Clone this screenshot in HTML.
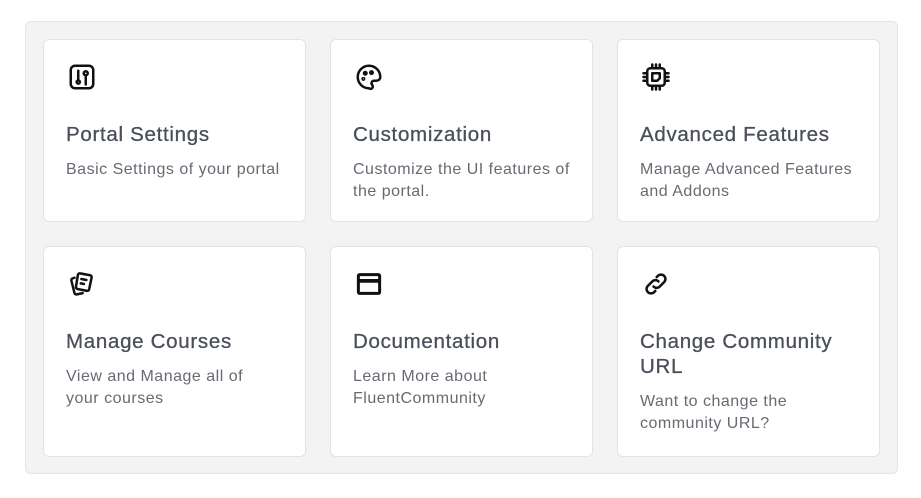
<!DOCTYPE html>
<html><head><meta charset="utf-8"><style>
*{box-sizing:border-box;margin:0;padding:0}
body{width:921px;height:498px;background:#fff;font-family:"Liberation Sans",sans-serif}
.wrap{position:absolute;left:25px;top:21px;width:873px;height:453px;background:#f3f3f3;border:1px solid #e4e4e4;border-radius:6px;padding:17px 17px 16px 17px;display:grid;grid-template-columns:263px 263px 263px;column-gap:24px;row-gap:24px;grid-template-rows:183px 211px}
.card{background:#fff;border:1px solid #e3e3e3;border-radius:6px;padding:22px 22px}
.card svg{display:block;width:30px;height:30px;margin-left:1px}
h3{font-size:20.5px;font-weight:normal;color:#4a4f5b;margin-top:30px;line-height:25px;letter-spacing:0.7px;-webkit-text-stroke:0.3px #4a4f5b}
p{font-size:16px;color:#666b73;margin-top:12px;line-height:22px;letter-spacing:0.5px}
</style></head><body>
<div class="wrap">
<div class="card"><svg viewBox="0 0 24 24" fill="none" stroke="#111" stroke-width="2" stroke-linecap="round"><rect x="3" y="3" width="18" height="18" rx="3.5"/><path d="M9 7v7"/><circle cx="9" cy="16" r="1.3"/><circle cx="15" cy="9" r="1.6"/><path d="M15 11v7"/></svg><h3>Portal Settings</h3><p>Basic Settings of your portal</p></div>
<div class="card"><svg viewBox="0 0 24 24" fill="none" stroke="#111" stroke-width="2" stroke-linecap="round" stroke-linejoin="round"><path d="M12 21a9 9 0 1 1 9-9c0 2-1.5 3-3.5 3H16a2 2 0 0 0-1.5 3.3A1.6 1.6 0 0 1 12 21z"/><circle cx="9" cy="9" r="1"/><circle cx="14" cy="8.5" r="1"/><circle cx="7.5" cy="13.5" r=".6"/></svg><h3>Customization</h3><p>Customize the UI features of the portal.</p></div>
<div class="card"><svg viewBox="0 0 24 24" fill="none" stroke="#111" stroke-width="2" stroke-linecap="round" stroke-linejoin="round"><rect x="5" y="5" width="14" height="14" rx="2.5"/><path d="M9 9h6v4l-2 2H9z"/><path d="M9 2v3M12 2v3M15 2v3M9 19v3M12 19v3M15 19v3M2 9h3M2 12h3M2 15h3M19 9h3M19 12h3M19 15h3"/></svg><h3>Advanced Features</h3><p>Manage Advanced Features and Addons</p></div>
<div class="card"><svg viewBox="0 0 24 24" fill="none" stroke="#111" stroke-width="2" stroke-linecap="round" stroke-linejoin="round"><path d="M10.5 3.5l8 1.5a1.5 1.5 0 0 1 1.2 1.8l-2 9.5a1.5 1.5 0 0 1-1.8 1.2l-7.5-1.5a1.5 1.5 0 0 1-1.2-1.8l1.5-9.5a1.5 1.5 0 0 1 1.8-1.2z"/><path d="M11.5 8l4 .8M11 11.5l2.5.5"/><path d="M6 7l-1.5 .5a1.5 1.5 0 0 0-1 1.8l2.5 10a1.5 1.5 0 0 0 1.8 1l4.7-1"/></svg><h3>Manage Courses</h3><p>View and Manage all of<br>your courses</p></div>
<div class="card"><svg viewBox="0 0 24 24" fill="none" stroke="#111" stroke-width="2.4"><rect x="3.5" y="4.5" width="17" height="15" rx="1"/><path d="M3.5 9.5h17" stroke-width="3"/></svg><h3>Documentation</h3><p>Learn More about FluentCommunity</p></div>
<div class="card"><svg viewBox="0 0 24 24" fill="none" stroke="#111" stroke-width="2" stroke-linecap="round"><path d="M10 14a3.5 3.5 0 0 0 5 0l3.5-3.5a3.5 3.5 0 0 0-5-5L12.5 6.5"/><path d="M14 10a3.5 3.5 0 0 0-5 0l-3.5 3.5a3.5 3.5 0 0 0 5 5l1-1"/></svg><h3>Change Community URL</h3><p>Want to change the community URL?</p></div>
</div>
</body></html>
